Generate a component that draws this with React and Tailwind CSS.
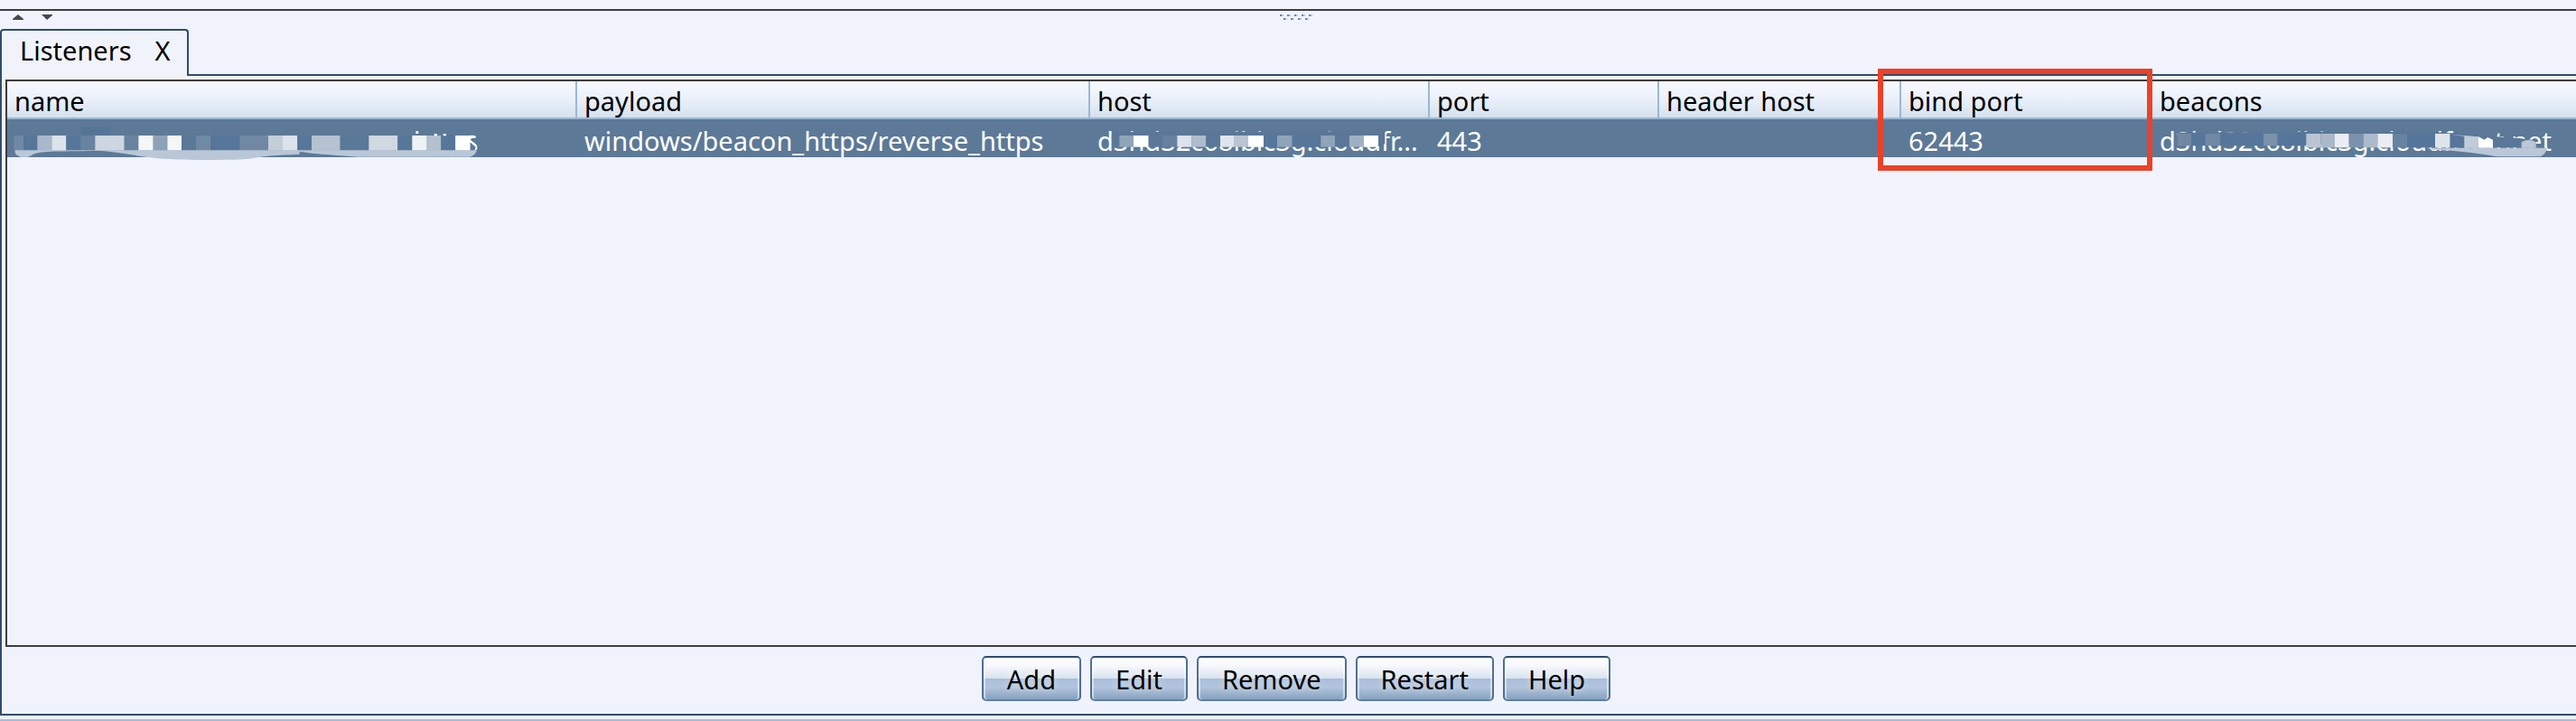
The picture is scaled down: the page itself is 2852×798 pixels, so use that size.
const NAME_BLOCKS = [
  [46, 78, "#7188a4"], [78, 124, "#56769a"], [124, 172, "#a9b8ca"], [172, 220, "#dde3ea"],
  [220, 268, "#56779a"], [268, 316, "#68829f"], [316, 413, "#ced6e1"], [413, 460, "#68839f"],
  [460, 509, "#f4f6f8"], [509, 556, "#8da1b7"], [556, 603, "#f4f6f8"], [603, 651, "#5a7897"],
  [651, 699, "#7089a5"], [699, 796, "#56769a"], [796, 891, "#7088a4"], [891, 939, "#c4ced9"],
  [939, 988, "#dde3ea"], [988, 1035, "#56769a"], [1035, 1130, "#b5c2d0"], [1130, 1225, "#5a7897"],
  [1225, 1321, "#d0d8e2"], [1321, 1369, "#577799"], [1369, 1418, "#eff2f5"], [1418, 1465, "#b4c1ce"],
  [1465, 1513, "#56769a"], [1513, 1561, "#ffffff"],
];

const HOST_BLOCKS = [
  [88, 135, "#8fa3b9"], [135, 185, "#ffffff"], [185, 230, "#5b7898"], [230, 280, "#67819f"],
  [280, 328, "#dde3ec"], [328, 376, "#aebccc"], [376, 423, "#5a7797"], [423, 470, "#dfe5ec"],
  [470, 516, "#b9c5d3"], [516, 567, "#ffffff"], [567, 612, "#56769a"], [612, 662, "#8fa3b9"],
  [662, 757, "#56769a"], [757, 804, "#8fa3b9"], [804, 852, "#5a7797"], [852, 900, "#a0b0c3"],
  [900, 948, "#ffffff"],
];

const BEACON_BLOCKS = [
  [92, 138, "#7088a3"], [138, 185, "#56759a"], [185, 235, "#7088a3"], [235, 378, "#56759a"],
  [378, 425, "#7a91ab"], [425, 520, "#56759a"], [520, 568, "#b9c5d3"], [568, 615, "#aab9ca"],
  [615, 662, "#eaedf3"], [662, 710, "#7b92ac"], [710, 757, "#adbacb"], [757, 807, "#eaedf3"],
  [807, 855, "#6883a1"], [855, 948, "#56759a"], [948, 998, "#dee4ec"], [998, 1045, "#56759a"],
];

function Blocks({ items, y, height }) {
  return items.map(([from, to, fill]) => (
    <rect key={from} x={from} y={y} width={to - from} height={height} fill={fill} />
  ));
}

function NameMosaic() {
  return (
    <svg className="pointer-events-none absolute left-0 top-0 h-12 w-[540px]" viewBox="24 36 1620 144" aria-hidden="true">
      <path d="M1360 84H1600V161H1360Z" fill="#5c7997" />
      <path d="M1400 60h200v30h-200z" fill="#5c7997" />
      <rect x="268" y="60" width="98" height="30" fill="#567596" />
      <Blocks items={NAME_BLOCKS} y={90} height={50} />
      <path d="M1442 84h10v7h-10zM1472 84h10v7h-10z" fill="#fff" />
      <path d="M1518 91L1532 92L1545 98L1552 92Q1570 86 1582 93L1578 99Q1566 97 1562 103Q1566 110 1578 116Q1588 124 1584 136L1576 142L1580 128L1561 112V138H1513V96Z" fill="#fff" />
      <path d="M50 139V145C52 164 88 168 106 155C130 139 180 144 320 140C400 144 440 156 500 163C560 174 780 172 822 168C870 158 920 155 995 152V143C1050 152 1100 154 1190 161H1560C1574 158 1582 148 1583 139Z" fill="#bac7d7" />
    </svg>
  );
}

function HostMosaic() {
  return (
    <svg className="pointer-events-none absolute left-0 top-0 h-12 w-[370px]" viewBox="-9 36 1110 144" aria-hidden="true">
      <path d="M66 78L330 77L620 78L970 74V116L960 126H88Q64 116 62 96Z" fill="#5a7797" />
      <Blocks items={HOST_BLOCKS} y={90} height={38} />
    </svg>
  );
}

function BeaconMosaic() {
  return (
    <svg className="pointer-events-none absolute left-0 top-0 h-12 w-[450px]" viewBox="9 36 1350 144" aria-hidden="true">
      <path d="M94 80L520 77L940 78L1110 90L1235 100L1283 106V130H998L640 118L400 122H120Q90 110 94 80Z" fill="#5a7797" />
      <Blocks items={BEACON_BLOCKS.slice(0, 6)} y={84} height={40} />
      <Blocks items={BEACON_BLOCKS.slice(6)} y={84} height={46} />
      <path d="M998 86L1092 94V131H1045V92Z" fill="#c0ccd9" />
      <path d="M1092 94L1112 104L1122 96L1140 104V131H1092Z" fill="#fff" />
      <path d="M1235 131V112Q1258 98 1283 112V131Z" fill="#bac7d6" />
      <path d="M920 131H1320C1316 148 1306 160 1290 160H1160C1100 152 1060 142 940 137Z" fill="#bac7d7" />
    </svg>
  );
}

const COLUMNS = ["name", "payload", "host", "port", "header host", "bind port", "beacons"];
const ACTIONS = ["Add", "Edit", "Remove", "Restart", "Help"];

function SplitBar() {
  return (
    <div className="relative flex h-[22px] items-start justify-center border-t-2 border-[#3c3c41] pl-[18px] pt-1">
      <div className="absolute left-[14px] top-1 flex gap-5">
        <button type="button" aria-label="Expand" className="block">
          <svg className="h-[6px] w-3" viewBox="0 0 12 6" aria-hidden="true">
            <path d="M6 0L12 5V6H0V5Z" fill="#48484c" />
          </svg>
        </button>
        <button type="button" aria-label="Collapse" className="block">
          <svg className="h-[6px] w-3" viewBox="0 0 12 6" aria-hidden="true">
            <path d="M0 0H12V1L6 6Z" fill="#48484c" />
          </svg>
        </button>
      </div>
      <svg className="h-[6px] w-9" viewBox="0 0 36 6" aria-hidden="true">
        {[0, 8, 16, 24, 32].map((x) => (
          <g key={x}>
            <rect x={x} y="0" width="2" height="2" fill="#6c819b" />
            <rect x={x + 2} y="0" width="2" height="2" fill="#b9c8da" />
          </g>
        ))}
        {[4, 12, 20, 28].map((x) => (
          <g key={x}>
            <rect x={x} y="4" width="2" height="2" fill="#6c819b" />
            <rect x={x + 2} y="4" width="2" height="2" fill="#b9c8da" />
          </g>
        ))}
      </svg>
    </div>
  );
}

export default function App() {
  return (
    <div className="flex h-screen min-h-96 flex-col overflow-hidden bg-[#f0f3fb] pt-[10px] font-['Noto_Sans','Open_Sans',sans-serif] text-[29px] text-black">
      <SplitBar />

      <div className="flex h-[52px]" role="tablist">
        <div className="flex items-center gap-[26px] rounded-t border-x-2 border-t-2 border-[#2f4d6d] bg-[#f1f3fa] pb-2 pl-5 pr-[18px] leading-none">
          <button type="button" role="tab" aria-selected="true">Listeners</button>
          <button type="button" aria-label="Close Listeners">X</button>
        </div>
        <div className="flex-1 border-b-2 border-[#2f4d6d]" />
      </div>

      <main className="flex min-h-0 flex-1 flex-col border-b-2 border-l-2 border-[#2f4d6d] pl-1 pt-1">
        <div className="min-h-0 flex-1 border-y-2 border-l-2 border-[#3c3c41]">
          <table className="w-full table-fixed border-separate border-spacing-0 text-left leading-none">
            <colgroup>
              <col className="w-[631px]" />
              <col className="w-[568px]" />
              <col className="w-[376px]" />
              <col className="w-[254px]" />
              <col className="w-[268px]" />
              <col className="w-[278px]" />
              <col />
            </colgroup>
            <thead>
              <tr>
                {COLUMNS.map((label) => (
                  <th
                    key={label}
                    scope="col"
                    className="relative h-[42px] border-b-2 border-r-2 border-[#9bb8d3] bg-linear-to-b from-[#f8faff] via-[#eaf0f9] to-[#d5e1ee] p-0 pl-2 pt-[2px] font-normal last:border-r-0"
                  >
                    {label}
                    {label === "bind port" && (
                      <span className="pointer-events-none absolute -left-[26px] -right-[2px] -top-[14px] z-10 h-[113px] border-6 border-[#ec4129]" />
                    )}
                  </th>
                ))}
              </tr>
            </thead>
            <tbody>
              <tr className="whitespace-nowrap bg-[#5c7997] text-white">
                <td className="relative h-[42px] p-0 pl-[450px] pt-1">
                  https
                  <NameMosaic />
                </td>
                <td className="p-0 pl-2 pt-1">windows/beacon_https/reverse_https</td>
                <td className="relative p-0 pl-2 pt-1">
                  d3hd32c68ibic3g.cloudfr...
                  <HostMosaic />
                </td>
                <td className="p-0 pl-2 pt-1">443</td>
                <td className="p-0 pl-2 pt-1" />
                <td className="p-0 pl-2 pt-1">62443</td>
                <td className="relative p-0 pl-2 pt-1">
                  d3hd32c68ibic3g.cloudfront.net
                  <BeaconMosaic />
                </td>
              </tr>
            </tbody>
          </table>
        </div>

        <div className="flex justify-center gap-[10px] pb-[14px] pl-3 pt-[10px]">
          {ACTIONS.map((label) => (
            <button
              key={label}
              type="button"
              className="h-[50px] rounded-[5px] border-2 border-x-[#4f7093] border-b-[#5f80a1] border-t-[#2f4d6d] bg-[linear-gradient(to_bottom,#ffffff_0%,#f6f8fc_20%,#d8e2ee_50%,#a9bddb_51%,#b3c5dc_70%,#86a2bf_100%)] px-[26px] leading-none shadow-[inset_2px_0_0_#ffffff80,inset_-2px_0_0_#ffffff80] [text-shadow:0_0_8px_#ffffff90]"
            >
              {label}
            </button>
          ))}
        </div>
      </main>
      <div className="mt-1 h-[2px] shrink-0 bg-[#a5bdd8]" />
    </div>
  );
}
